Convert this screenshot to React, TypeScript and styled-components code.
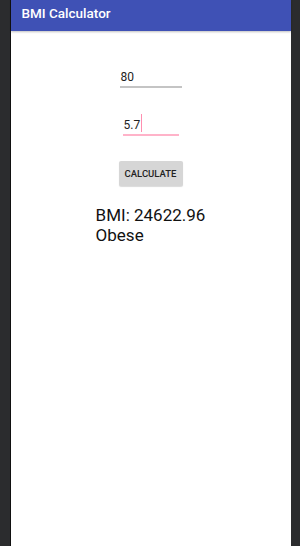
import styled, {createGlobalStyle} from "styled-components";

const GlobalStyle = createGlobalStyle`
    html, body {
        margin: 0;
        padding: 0;
        background: #2b2c2e;
    }
    body {
        font-family: Roboto, "Noto Sans", sans-serif;
    }
`;

export default function App() {
    return (
        <>
            <GlobalStyle/>
            <Frame>
                <Screen>
                    <AppBar>BMI Calculator</AppBar>
                    <Content>
                        <Field>
                            <FieldText>80</FieldText>
                            <Underline $width={62} $color="#c4c4c4"/>
                        </Field>
                        <Field $top={29}>
                            <FieldText>5.7<Cursor/></FieldText>
                            <Underline $width={56} $color="#ffb3c9"/>
                        </Field>
                        <Button>CALCULATE</Button>
                        <Result>
                            <div>BMI: 24622.96</div>
                            <div>Obese</div>
                        </Result>
                    </Content>
                </Screen>
            </Frame>
        </>
    )
}

const Frame = styled.div`
    width: 300px;
    height: 546px;
    display: flex;
    justify-content: center;
    background: #2b2c2e;
`;

const Screen = styled.div`
    width: 280px;
    height: 546px;
    background: #ffffff;
    border-left: 1px solid #111;
    display: flex;
    flex-direction: column;
`;

const AppBar = styled.div`
    height: 31px;
    background: #3f51b5;
    color: #ffffff;
    font-size: 13.5px;
    font-weight: 500;
    padding-left: 11px;
    line-height: 27px;
    box-shadow: 0 1px 2px rgba(0, 0, 0, 0.25);
`;

const Content = styled.div`
    display: flex;
    flex-direction: column;
    align-items: center;
    padding-top: 38px;
`;

const Field = styled.div<{ $top?: number }>`
    display: flex;
    flex-direction: column;
    align-items: flex-start;
    margin-top: ${p => p.$top ?? 0}px;
`;

const FieldText = styled.div`
    position: relative;
    font-size: 12px;
    color: #222;
    line-height: 16px;
    height: 16px;
    padding-left: 1px;
`;

const Cursor = styled.span`
    position: absolute;
    top: -3px;
    right: -2px;
    width: 1.5px;
    height: 18px;
    background: #ff8fb0;
`;

const Underline = styled.div<{ $width: number; $color: string }>`
    width: ${p => p.$width}px;
    height: 2px;
    margin-top: 1px;
    background: ${p => p.$color};
`;

const Button = styled.div`
    margin-top: 25px;
    width: 64px;
    height: 25px;
    background: #d6d6d6;
    border-radius: 2px;
    box-shadow: 0 1px 1px rgba(0, 0, 0, 0.15);
    font-size: 9.5px;
    font-weight: 500;
    color: #222;
    display: flex;
    align-items: center;
    justify-content: center;
`;

const Result = styled.div`
    margin-top: 19px;
    font-size: 17px;
    line-height: 20px;
    color: #111;
`;
